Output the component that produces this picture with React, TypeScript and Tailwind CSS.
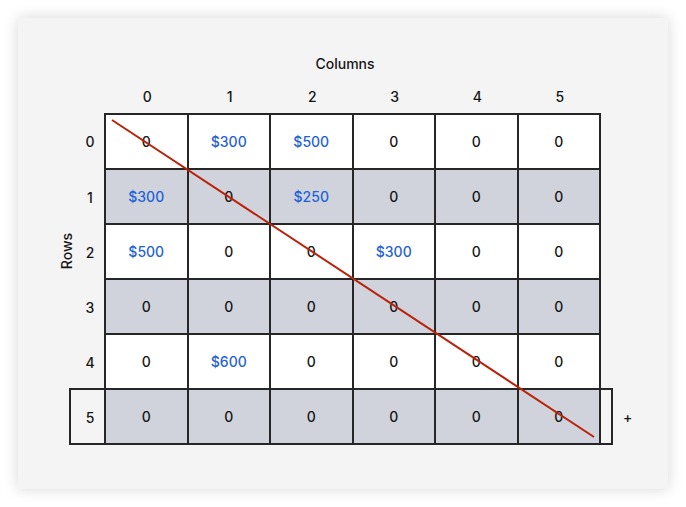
const grid: string[][] = [
    ["0", "$300", "$500", "0", "0", "0"],
    ["$300", "0", "$250", "0", "0", "0"],
    ["$500", "0", "0", "$300", "0", "0"],
    ["0", "0", "0", "0", "0", "0"],
    ["0", "$600", "0", "0", "0", "0"],
    ["0", "0", "0", "0", "0", "0"],
];

export default function App() {
    return (
        <div
            className="min-h-screen bg-white p-[18px] text-[#161616]"
            style={{ fontFamily: "Inter, 'Noto Sans', sans-serif" }}
        >
            <div className="h-[471px] w-[650px] bg-[#f4f4f4] pl-[51px] pt-[36px] shadow-[0_0_14px_rgba(0,0,0,0.16)]">
                <div className="w-[552px] text-center text-sm leading-5 font-medium">
                    Columns
                </div>

                <div className="mt-[13px] flex h-5 text-sm leading-5 font-medium">
                    <div className="w-[37px]" />
                    {grid[0].map((_, i) => (
                        <div key={i} className="w-[82.5px] text-center">
                            {i}
                        </div>
                    ))}
                </div>

                <div className="relative mt-[6px]">
                    <div className="absolute left-[-2px] top-[138px] origin-center -translate-x-1/2 -translate-y-1/2 -rotate-90 text-sm font-medium">
                        Rows
                    </div>

                    {grid.map((row, r) => (
                        <div key={r} className="flex items-center">
                            <div className="w-[35px] pl-[7px] pt-[1px] text-center text-sm font-medium">
                                {r}
                            </div>
                            <div
                                className={`flex border-l-2 border-[#262626] ${r === 0 ? "border-t-2" : ""}`}
                            >
                                {row.map((v, c) => (
                                    <div
                                        key={c}
                                        className={`flex h-[55px] w-[82.5px] items-center justify-center border-r-2 border-b-2 border-[#262626] text-sm font-medium ${
                                            r % 2 === 1 ? "bg-[#d0d3db]" : "bg-white"
                                        } ${v.startsWith("$") ? "text-[#1f62d8]" : ""}`}
                                    >
                                        {v}
                                    </div>
                                ))}
                            </div>
                            {r === 5 && (
                                <div className="ml-[22px] text-sm font-medium">+</div>
                            )}
                        </div>
                    ))}

                    {/* selected row outline */}
                    <div className="pointer-events-none absolute left-0 top-[275px] h-[57px] w-[544px] border-2 border-[#262626]" />

                    <svg
                        className="pointer-events-none absolute left-0 top-0"
                        width="560"
                        height="340"
                    >
                        <line
                            x1="43"
                            y1="7"
                            x2="525"
                            y2="324"
                            stroke="#b8230a"
                            strokeWidth="2"
                        />
                    </svg>
                </div>
            </div>
        </div>
    );
}
